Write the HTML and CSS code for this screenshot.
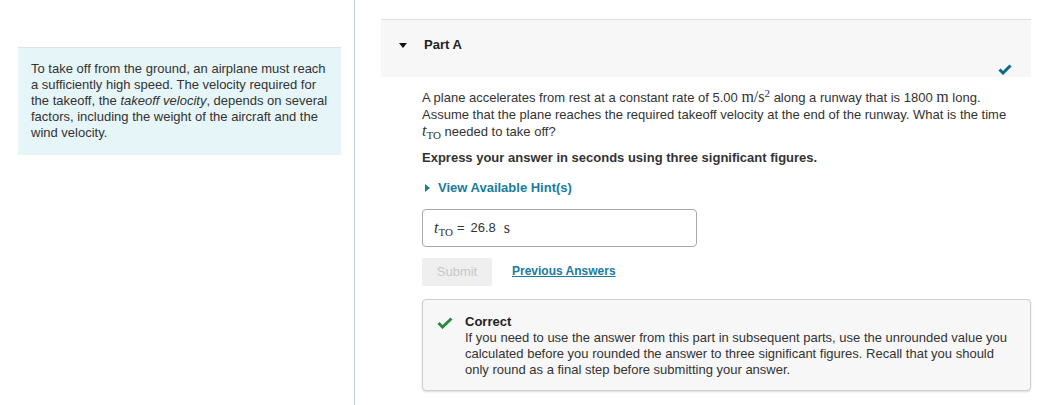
FILE: index.html
```html
<!DOCTYPE html>
<html>
<head>
<meta charset="utf-8">
<link rel="stylesheet" href="styles.css">
</head>
<body>
<div class="page">
  <aside class="intro-col">
    <div class="intro">To take off from the ground, an airplane must reach<br>a sufficiently high speed. The velocity required for<br>the takeoff, the <i>takeoff velocity</i>, depends on several<br>factors, including the weight of the aircraft and the<br>wind velocity.</div>
  </aside>
  <main class="main-col">
    <div class="part-head">
      <div class="part-title"><span class="tri-down"></span><span>Part A</span></div>
      <svg class="part-check" width="14" height="11" viewBox="0 0 14 11"><path d="M1.5 5.5 L5 9 L12.5 1.5" fill="none" stroke="#0b6a8c" stroke-width="3"/></svg>
    </div>
    <div class="part-body">
      <p class="q">A plane accelerates from rest at a constant rate of 5.00&nbsp;<span class="m">m/s<sup>2</sup></span> along a runway that is 1800&nbsp;<span class="m">m</span> long. Assume that the plane reaches the required takeoff velocity at the end of the runway. What is the time <span class="m"><i>t</i><sub>TO</sub></span> needed to take off?</p>
      <p class="instr">Express your answer in seconds using three significant figures.</p>
      <div class="hint"><span class="tri-right"></span>View Available Hint(s)</div>
      <div class="answer"><span class="m"><i>t</i><sub>TO</sub></span><span class="eq">=</span><span class="val">26.8</span><span class="m unit">s</span></div>
      <div class="actions">
        <span class="submit">Submit</span>
        <a class="prev">Previous Answers</a>
      </div>
      <div class="feedback">
        <svg class="ok" width="16" height="12" viewBox="0 0 16 12"><path d="M1.5 6 L5.5 10 L14.5 1.5" fill="none" stroke="#2b8a3a" stroke-width="3"/></svg>
        <div class="fb-text">
          <div class="fb-title">Correct</div>
          <div>If you need to use the answer from this part in subsequent parts, use the unrounded value you calculated before you rounded the answer to three significant figures. Recall that you should only round as a final step before submitting your answer.</div>
        </div>
      </div>
    </div>
  </main>
</div>
</body>
</html>
```
FILE: styles.css
```css
html, body {
  margin: 0;
  padding: 0;
  background: #fff;
}
body {
  font-family: "Liberation Sans", Arial, sans-serif;
  font-size: 13px;
  line-height: 16px;
  color: #333;
}
.page {
  display: flex;
  height: 405px;
}
.intro-col {
  width: 355px;
  box-sizing: border-box;
  border-right: 1px solid #c2cbd8;
  padding: 47px 13px 0 18px;
}
.intro {
  background: #e6f5f7;
  border-top: 1px solid #dfe3e6;
  padding: 13px 0 14px 13px;
  white-space: nowrap;
  overflow: hidden;
}
.main-col {
  flex: 0 0 648px;
  padding: 19px 0 0 26px;
}
.part-head {
  background: #f7f7f7;
  border-top: 1px solid #e0e0e0;
  height: 57px;
  position: relative;
}
.part-title {
  display: flex;
  align-items: center;
  gap: 17px;
  padding: 17px 0 0 18px;
  font-weight: bold;
  color: #222;
  font-size: 13px;
}
.tri-down {
  width: 0;
  height: 0;
  border-left: 4.5px solid transparent;
  border-right: 4.5px solid transparent;
  border-top: 5px solid #111;
}
.part-check {
  position: absolute;
  right: 19px;
  bottom: 2px;
}
.part-body {
  padding: 12px 0 0 41px;
}
.q {
  margin: 0;
  max-width: 588px;
  line-height: 16.5px;
}
.m {
  font-family: "Liberation Serif", "DejaVu Serif", serif;
  font-size: 16px;
  line-height: 1;
  color: #333;
}
.m sup {
  font-size: 11px;
  line-height: 0;
  vertical-align: 5px;
}
.m sub {
  font-size: 11px;
  line-height: 0;
  vertical-align: -3px;
}
.instr {
  margin: 9px 0 0;
  font-weight: bold;
  color: #333;
}
.hint {
  margin-top: 14px;
  display: flex;
  align-items: center;
  gap: 8px;
  padding-left: 3px;
  color: #1a7b9b;
  font-weight: bold;
}
.tri-right {
  width: 0;
  height: 0;
  border-top: 4.5px solid transparent;
  border-bottom: 4.5px solid transparent;
  border-left: 5px solid #1a7b9b;
}
.answer {
  margin-top: 13px;
  width: 275px;
  height: 38px;
  box-sizing: border-box;
  border: 1px solid #a9a9a9;
  border-radius: 4px;
  display: flex;
  align-items: center;
  padding-left: 11px;
}
.eq {
  margin: 0 6px 0 4px;
}
.val {
  margin-right: 8px;
}
.actions {
  margin-top: 11px;
  display: flex;
  align-items: center;
  gap: 20px;
}
.submit {
  display: inline-block;
  width: 70px;
  height: 28px;
  line-height: 28px;
  text-align: center;
  background: #efefef;
  color: #c8c8c8;
  border-radius: 2px;
}
.prev {
  color: #1a7b9b;
  font-weight: bold;
  text-decoration: underline;
  font-size: 12px;
  margin-top: -2px;
}
.feedback {
  margin-top: 13px;
  width: 609px;
  box-sizing: border-box;
  border: 1px solid #cfcfcf;
  border-radius: 4px;
  background: #f7f7f7;
  box-shadow: 0 1px 2px rgba(0,0,0,0.15);
  display: flex;
  gap: 12px;
  padding: 14px 14px 12px 14px;
}
.ok {
  flex: none;
  margin-top: 3px;
}
.fb-title {
  font-weight: bold;
  color: #222;
}
```
